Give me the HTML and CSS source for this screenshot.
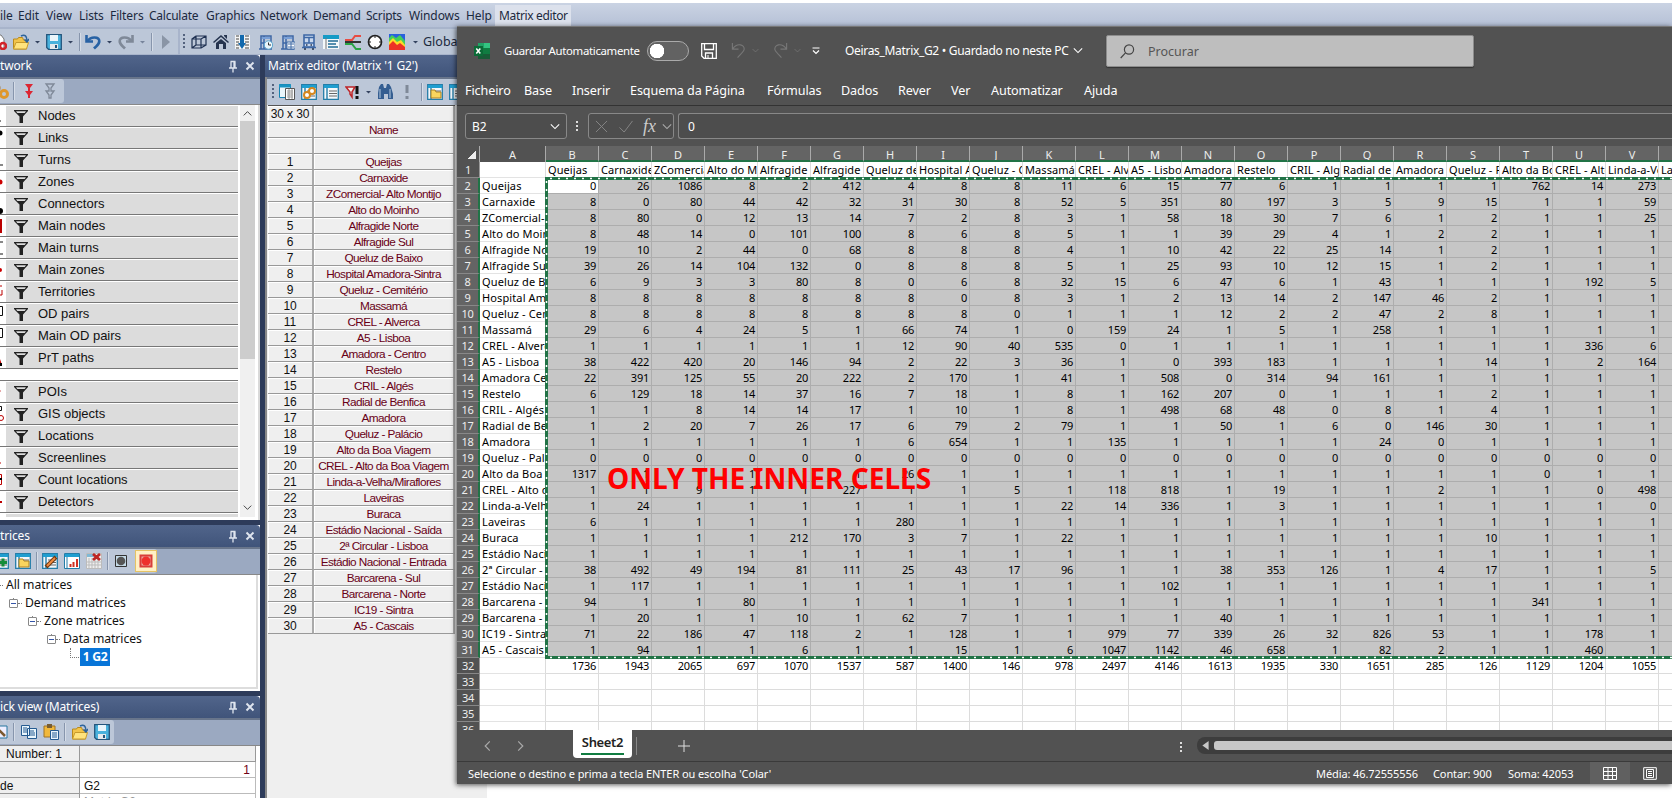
FILE: index.html
```html
<!DOCTYPE html>
<html lang="en">
<head>
<meta charset="utf-8">
<title>Matrix editor</title>
<link rel="stylesheet" href="styles.css">
</head>
<body>
<svg class="defs" aria-hidden="true">
  <symbol id="funnel" viewBox="0 0 14 13"><path d="M0 0h14v1L9 6.5V13H5.5V6.5L0 1z" fill="#222"/><path d="M2 1.2h10L10.700 3H3.300z" fill="#ddd"/></symbol>
  <symbol id="pin" viewBox="0 0 10 12"><path d="M2.500 1h5M3 1v6M6 1v6M7 1v6M1 7.500h8M5 8v4" stroke="#dfe5ef" stroke-width="1.300" fill="none"/></symbol>
  <symbol id="close" viewBox="0 0 10 10"><path d="M1.500 1.500l7 7M8.500 1.500l-7 7" stroke="#dfe5ef" stroke-width="1.900"/></symbol>
  <symbol id="arrow" viewBox="0 0 9 16"><path d="M2 7h5L4.500 9.500z" fill="#34435f"/></symbol>
  <symbol id="folder" viewBox="0 0 16 16"><path d="M.5 15V5h4l1-1.500h4L10.500 6h3v9z" fill="#f2c44a" stroke="#b98a1c"/><path d="M.5 15L3 8.500h12.500L13.500 15z" fill="#ffe37d" stroke="#c79a2c"/><path d="M8 2c4-2 6 0 6 5M11.500 5.500L14 8l2-3" fill="none" stroke="#2d639b" stroke-width="1.500"/></symbol>
  <symbol id="save" viewBox="0 0 16 16"><path d="M.7.7h14.600v14.600H2.500L.7 13.500z" fill="#49b1dc" stroke="#24557c" stroke-width="1.300"/><path d="M4 1h8v6H4z" fill="#eaf5fb"/><path d="M4 10h8v5H4z" fill="#e5e8ec"/><path d="M9 11h2v3H9z" fill="#24557c"/></symbol>
  <symbol id="undo" viewBox="0 0 16 16"><path d="M1.500 1v6.500H8" fill="none" stroke="currentColor" stroke-width="2.600"/><path d="M2.500 7C6 2 14 2.500 14.300 7c.2 3.500-3 5-5.300 7.500" fill="none" stroke="currentColor" stroke-width="2.600"/></symbol>
  <symbol id="sheet" viewBox="0 0 16 16"><path d="M.7.7h14.600v14.600H.7z" fill="#f4f8fb" stroke="#247da8" stroke-width="1.300"/><path d="M1 1h14v3H1z" fill="#1f9ed0"/><path d="M4 4v11" stroke="#247da8" stroke-width="1.400"/><path d="M6 7h8M6 9.500h8M6 12h8" stroke="#666"/></symbol>
  <symbol id="stop" viewBox="0 0 16 16"><path d="M4 15V2h10v13M4 9h10M7 2v13M2 15h13" fill="none" stroke="#3d67a5" stroke-width="1.500"/><path d="M5 3h8v2H5z" fill="#79a0d8"/></symbol>
  <symbol id="chev" viewBox="0 0 12 8"><path d="M1 1.500l5 5 5-5" fill="none" stroke="currentColor" stroke-width="1.300"/></symbol>
</svg>

<nav class="menubar"><span>ile</span><span>Edit</span><span>View</span><span>Lists</span><span>Filters</span><span>Calculate</span><span>Graphics</span><span>Network</span><span>Demand</span><span>Scripts</span><span>Windows</span><span>Help</span><span class="active">Matrix editor</span></nav>

<div class="toolbar">
  <div class="group main">
    <svg class="i doc" viewBox="0 0 16 16"><path d="M3 1h7l3 4v10H3z" fill="#fff" stroke="#777"/><circle cx="12" cy="12" r="3" fill="none" stroke="#d2232a" stroke-width="2.500"/></svg>
    <svg class="i"><use href="#folder"/></svg><svg class="a"><use href="#arrow"/></svg>
    <svg class="i"><use href="#save"/></svg><svg class="a"><use href="#arrow"/></svg><i class="sep"></i>
    <svg class="i blue"><use href="#undo"/></svg><svg class="a"><use href="#arrow"/></svg>
    <svg class="i gray flip"><use href="#undo"/></svg><svg class="a dim"><use href="#arrow"/></svg><i class="sep"></i>
    <svg class="i" viewBox="0 0 16 16"><path d="M5 1l8 7-8 7z" fill="#8a95a6"/></svg>
  </div>
  <div class="group extra">
    <i class="grip"></i>
    <svg class="i" viewBox="0 0 16 16"><path d="M1 5h9v9H1zM5 2h10v9H5zM1 5l4-3M10 5l5-3M1 14l4-3M10 14l5-3" fill="none" stroke="#1f3152" stroke-width="1.200"/></svg>
    <svg class="i" viewBox="0 0 16 16"><path d="M0 8l8-7 8 7-1 1-7-6-7 6zM11 1h3v4l-3-3zM3 9l5-4 5 4v6h-3v-5H6v5H3z" fill="#25344f"/></svg>
    <svg class="i" viewBox="0 0 16 16"><path d="M0 1h15v14H0z" fill="#f5f5f5"/><path d="M1 2h3M1 5h3M1 8h3M1 11h3M1 14h3M10 2h4M10 5h4M10 8h4M10 11h4M10 14h4" stroke="#444"/><path d="M5 1h4v8h2l-4 6-4-6h2z" fill="#1369ad"/></svg>
    <svg class="i" viewBox="0 0 16 16"><use href="#stop"/><circle cx="11.500" cy="11" r="4.200" fill="#e9f5fb" stroke="#58a5ce"/><path d="M11.500 8.500V11H14" stroke="#333" fill="none"/></svg>
    <svg class="i" viewBox="0 0 16 16"><use href="#stop"/><path d="M8 8h8v7H8z" fill="#fff" stroke="#426ca6"/><path d="M9 10h6M9 13h6M12 8v7" stroke="#426ca6"/></svg>
    <svg class="i" viewBox="0 0 16 16"><path d="M3 1h10v12H3z" fill="#c9d8ee" stroke="#3d67a5" stroke-width="1.600"/><path d="M3 3.500h10M3 9h10M8 3v6M1 13.500h14" stroke="#3d67a5" stroke-width="1.500"/><path d="M4 14v2M12 14v2M5 11h1.500M9.500 11H11" stroke="#25344f" stroke-width="1.500"/></svg>
    <svg class="i" viewBox="0 0 16 16"><path d="M0 1h16v14H0z" fill="#f4f8fa"/><path d="M0 1h16v4H0z" fill="#169bc6"/><path d="M5 7h10M5 10h8M5 13h10" stroke="#216b97" stroke-width="1.500"/><path d="M3 4v11" stroke="#777"/></svg>
    <svg class="i" viewBox="0 0 16 16"><path d="M0 6h7l3-4h6" fill="none" stroke="#e84c43" stroke-width="2"/><path d="M0 8h16" stroke="#333" stroke-width="2"/><path d="M0 10h7l4 5h5" fill="none" stroke="#2aa344" stroke-width="2"/></svg>
    <svg class="i" viewBox="0 0 16 16"><circle cx="8" cy="8" r="6.500" fill="#fff" stroke="#222" stroke-width="1.700"/><path d="M8 1v3M8 12v3M1 8h3M12 8h3" stroke="#222"/></svg>
    <svg class="i" viewBox="0 0 16 16"><path d="M0 0h16v16H0z" fill="#2a61dd"/><path d="M0 4l3-3 4 3 4-3 5 6v9H0z" fill="#43cf59"/><path d="M0 8l4-4 4 4 4-2 4 5v5H0z" fill="#ffd928"/><path d="M0 11l4-4 4 4 3-2 5 4v3H0z" fill="#ed3126"/></svg>
    <svg class="a"><use href="#arrow"/></svg><span class="global">Global</span>
  </div>
</div>

<main class="workspace">
  <aside class="left">
    <section class="panel network">
      <header class="title"><span>twork</span><svg class="pin"><use href="#pin"/></svg><svg class="close"><use href="#close"/></svg></header>
      <div class="tools"><div class="toolgroup net-tools">
        <svg class="i" viewBox="0 0 16 16"><circle cx="4" cy="5" r="3.500" fill="#a67431"/><circle cx="11" cy="11" r="3.500" fill="none" stroke="#df972c" stroke-width="3"/></svg><i class="sep"></i>
        <svg class="i red" viewBox="0 0 16 16"><path d="M4 1h8L9 5v3h3l-3 4v3H7v-3L4 8h3V5z" fill="currentColor"/></svg>
        <svg class="i gray" viewBox="0 0 16 16"><path d="M4 1h8L9 5v3h3l-3 4v3H7v-3L4 8h3V5z" fill="none" stroke="currentColor" stroke-width="1.300"/></svg>
      </div></div>
      <div class="listwrap"><div id="objects"></div><div class="scroll"><svg class="up"><use href="#chev"/></svg><i></i><svg><use href="#chev"/></svg></div></div>
    </section>
    <section class="panel matrices">
      <header class="title"><span>trices</span><svg class="pin"><use href="#pin"/></svg><svg class="close"><use href="#close"/></svg></header>
      <div class="tools"><div class="toolgroup mat-tools">
        <svg class="i" viewBox="0 0 16 16"><use href="#sheet"/><path d="M6 9.500h8M10 5.500v8" stroke="#168d3a" stroke-width="3"/></svg>
        <svg class="i" viewBox="0 0 16 16"><use href="#sheet"/><path d="M4 14V6h4l1 2h5v6z" fill="#f9d55e" stroke="#a88126"/></svg><i class="sep"></i>
        <svg class="i" viewBox="0 0 16 16"><use href="#sheet"/><path d="M4 14L14 4" stroke="#6d3b14" stroke-width="4"/><path d="M5 13l8-8" stroke="#f28a3e" stroke-width="2"/></svg>
        <svg class="i" viewBox="0 0 16 16"><path d="M.5.500h15v15H.5z" fill="#fff" stroke="#247da8"/><path d="M1 1h14v3H1z" fill="#1f9ed0"/><path d="M3 4v11" stroke="#247da8"/><path d="M6.500 14v-3M9.500 14V9M13 14V6" stroke="#d13225" stroke-width="2"/></svg>
        <svg class="i" viewBox="0 0 16 16"><path d="M.5.500h15v15H.5z" fill="#eee" stroke="#bbb"/><path d="M1 1h7v3H1z" fill="#7fb9d6"/><path d="M3 5v10M6 5v10M9 5v10M12 5v10M1 9h14M1 12h14" stroke="#bbb"/><path d="M7 1l7 6M14 1L7 7" stroke="#bd2725" stroke-width="2.800"/></svg><i class="sep"></i>
        <svg class="i" viewBox="0 0 16 16"><path d="M2.500 2.500h11v11h-11z" fill="#c4d9e5" stroke="#333"/><circle cx="8" cy="8" r="4.300" fill="#555"/></svg>
        <svg class="i rec" viewBox="0 0 16 16"><path d="M2.500 2.500h11v11h-11z" fill="#edaaa2" stroke="#d83e3a" stroke-width="2"/><circle cx="8" cy="8" r="4.500" fill="#ee302b"/></svg>
      </div></div>
      <div class="tree">
        <div class="node n0"><i class="dots"></i>All matrices</div>
        <div class="node n1"><b></b><i class="dots"></i>Demand matrices</div>
        <div class="node n2"><b></b><i class="dots"></i>Zone matrices</div>
        <div class="node n3"><b></b><i class="dots"></i>Data matrices</div>
        <div class="node n4"><i class="elbow"></i><strong>1 G2</strong></div>
      </div>
    </section>
    <section class="panel quick">
      <header class="title"><span>ick view (Matrices)</span><svg class="pin"><use href="#pin"/></svg><svg class="close"><use href="#close"/></svg></header>
      <div class="tools"><div class="toolgroup quick-tools">
        <svg class="i" viewBox="0 0 16 16"><path d="M0 2h15v12H0z" fill="#eef" stroke="#2676a0"/><path d="M5 4l8 8" stroke="#7a5930" stroke-width="2.500"/></svg><i class="sep"></i>
        <svg class="i" viewBox="0 0 16 16"><path d="M.5 1.500h8v10h-8zM6.500 4.500h9v10h-9z" fill="#eaf6fd" stroke="#255b91"/><path d="M2 4h4M2 6h4M2 8h4M8 7h5M8 9h6M8 11h6" stroke="#255b91"/></svg>
        <svg class="i" viewBox="0 0 16 16"><path d="M1 2h11v11H1z" fill="#f1b83b" stroke="#9f7226"/><path d="M4 0h5v4H4z" fill="#785d32"/><path d="M7.500 6.500h8v9h-8z" fill="#eaf6fd" stroke="#255b91"/><path d="M9 9h5M9 11h5M9 13h5" stroke="#255b91"/></svg><i class="sep"></i>
        <svg class="i"><use href="#folder"/></svg><svg class="i"><use href="#save"/></svg>
      </div></div>
      <div class="props"><span class="gray-cell number">Number: 1</span><span class="gray-cell"></span><span class="gray-cell"></span><span class="value">1</span><span class="gray-cell">de</span><span>G2</span><span class="gray-cell cut"></span><span class="cut">Matrix G2</span></div>
    </section>
  </aside>

  <section class="editor">
    <header class="title"><span>Matrix editor (Matrix '1 G2')</span></header>
    <div class="toolgroup edit-tools"><i class="grip"></i>
      <svg class="i" viewBox="0 0 16 16"><path d="M.5.500h11v13H.5z" fill="#eaf6fb" stroke="#1683b1"/><path d="M0 2h12" stroke="#1994c3" stroke-width="3"/><path d="M6.500 4.500h9v11h-9z" fill="#fff" stroke="#555"/><path d="M8 7h6M8 9h6M8 11h6M8 13h6M10 5v10M13 5v10" stroke="#999"/></svg>
      <svg class="i" viewBox="0 0 16 16"><use href="#sheet"/><circle cx="6" cy="11" r="3" fill="#fff" stroke="#d48720" stroke-width="2"/><circle cx="11" cy="7" r="3" fill="#fff" stroke="#d48720" stroke-width="2"/></svg>
      <svg class="i"><use href="#sheet"/></svg>
      <svg class="i" viewBox="0 0 16 16"><path d="M1 3h9L7 8v5L5 10V8z" fill="#eee" stroke="#bd2529" stroke-width="1.500"/><path d="M12 2v8M12 12v3" stroke="#111" stroke-width="3"/></svg>
      <svg class="a"><use href="#arrow"/></svg>
      <svg class="i" viewBox="0 0 16 16"><path d="M2 3l2-3h2l1 4h2l1-4h2l2 3 2 7v5h-5v-5H7v5H1v-6z" fill="#355e91"/><path d="M3 5v9M13 5v9" stroke="#b8cbe0"/></svg>
      <svg class="i gray" viewBox="0 0 16 16"><path d="M8 1v8M8 12v3" stroke="currentColor" stroke-width="3"/></svg><i class="sep"></i>
      <svg class="i" viewBox="0 0 16 16"><use href="#sheet"/><path d="M4 14V6h4l1 2h5v6z" fill="#f9d55e" stroke="#a88126"/></svg>
      <svg class="i"><use href="#sheet"/></svg>
    </div>
    <div id="zones"></div>
  </section>
</main>
<div class="backdrop"></div>

<section class="excel">
  <header class="xl-title">
    <svg class="logo" viewBox="0 0 16 16"><path d="M4 0h12v16H4z" fill="#107c41"/><path d="M4 0h6v5H4z" fill="#21a366"/><path d="M10 0h6v5h-6z" fill="#33c481"/><path d="M4 11h12v5H4z" fill="#185c37"/><path d="M0 3h9v10H0z" fill="#0b6b37"/><path d="M2.300 5.500l4 5M6.300 5.500l-4 5" stroke="#fff" stroke-width="1.500"/></svg>
    <span class="autosave">Guardar Automaticamente</span><i class="toggle"></i>
    <svg class="xl-save" viewBox="0 0 16 16"><path d="M.7.7h14.600v14.600H3L.7 13zM3.500 1v5.500h9V1M4.500 15v-5h7v5" fill="none" stroke="#fff" stroke-width="1.300"/><path d="M7 12v3" stroke="#fff"/></svg>
    <svg class="xl-undo" viewBox="0 0 16 16"><path d="M1.500 0v6.500H8M2 6C7-1 15 2 14 7c-.5 2-3 4-7 8.500" fill="none" stroke="#777" stroke-width="1.200"/></svg><svg class="tiny"><use href="#chev"/></svg>
    <svg class="xl-undo flip" viewBox="0 0 16 16"><path d="M1.500 0v6.500H8M2 6C7-1 15 2 14 7c-.5 2-3 4-7 8.500" fill="none" stroke="#777" stroke-width="1.200"/></svg><svg class="tiny"><use href="#chev"/></svg>
    <svg class="more" viewBox="0 0 8 8"><path d="M.5 1h7" stroke="#fff"/><path d="M1 3.500l3 3 3-3" stroke="#fff" fill="none" stroke-width="1.200"/></svg>
    <span class="filename">Oeiras_Matrix_G2 • Guardado no neste PC</span><svg class="filechev"><use href="#chev"/></svg>
    <div class="search"><svg viewBox="0 0 15 15"><circle cx="9" cy="5.500" r="4.600" fill="none" stroke="#444" stroke-width="1.200"/><path d="M5.500 8.800L.7 14" stroke="#444" stroke-width="1.200"/></svg><span>Procurar</span></div>
  </header>
  <nav class="ribbon"><span>Ficheiro</span><span>Base</span><span>Inserir</span><span>Esquema da Página</span><span>Fórmulas</span><span>Dados</span><span>Rever</span><span>Ver</span><span>Automatizar</span><span>Ajuda</span></nav>
  <div class="formula"><div class="namebox"><span>B2</span><svg><use href="#chev"/></svg></div><i class="vdots"></i><div class="fx"><svg viewBox="0 0 14 14"><path d="M1 1l12 12M13 1L1 13" stroke="#888"/></svg><svg class="check" viewBox="0 0 16 14"><path d="M1 8l5 5L15 1" fill="none" stroke="#888"/></svg><em>fx</em><svg class="fxchev"><use href="#chev"/></svg></div><div class="entry">0</div></div>
  <div class="sheet"><div id="grid"></div><svg class="marquee" viewBox="0 0 1127 482"><path d="M1127 1.500H1.500v479H1127" fill="none" stroke="#217346" stroke-width="3"/><path d="M1127 1.500H1.500v479H1127" fill="none" stroke="#fff" stroke-width="1.500" stroke-dasharray="2 6"/></svg><strong class="note">ONLY THE INNER CELLS</strong></div>
  <div class="tabs"><svg class="prev"><use href="#chev"/></svg><svg class="next"><use href="#chev"/></svg><div class="tab"><span>Sheet2</span></div><i class="tabsep"></i><svg class="plus" viewBox="0 0 12 12"><path d="M6 0v12M0 6h12" stroke="#ddd"/></svg><i class="vdots"></i><div class="hscroll"><svg viewBox="0 0 7 10"><path d="M7 0v10L0 5z" fill="#c6c6c6"/></svg><i></i></div></div>
  <footer class="status"><span class="msg">Selecione o destino e prima a tecla ENTER ou escolha 'Colar'</span><span class="avg">Média: 46.72555556</span><span class="count">Contar: 900</span><span class="sum">Soma: 42053</span><div class="view"><svg viewBox="0 0 14 13"><path d="M.5.500h13v12H.5zM5 .5v12M9.500.500v12M.5 4.500h13M.5 8.500h13" fill="none" stroke="#fff"/></svg></div><svg class="page" viewBox="0 0 14 13"><path d="M.7.700h12.600v11.600H.7zM3.500 2.500h7v8h-7zM5 4.500h4M5 6.500h4M5 8.500h4" fill="none" stroke="#fff"/></svg></footer>
</section>
<script src="script.js"></script>
</body>
</html>
```

FILE: styles.css
```css
* { box-sizing: border-box; }
body { margin: 0; width: 1672px; height: 798px; overflow: hidden; position: relative; background: #fff; font: 12px "Noto Sans", "Open Sans", sans-serif; color: #111; }
svg { display: block; flex: none; }
.defs { position: absolute; width: 0; height: 0; }
.i { width: 16px; height: 16px; }
.a { width: 9px; height: 16px; }
.flip { transform: scaleX(-1); }
.dim { opacity: .5; }
.blue { color: #2862a4; }
.gray { color: #7f8998; }
.red { color: #dc2633; }
.sep { width: 2px; height: 18px; border-left: 1px solid #8795ac; border-right: 1px solid #d5dce7; flex: none; }
.grip { width: 2px; height: 16px; flex: none; background: repeating-linear-gradient(#53627d 0 2px, transparent 2px 4px); }

.menubar { margin-top: 3px; height: 24px; display: flex; background: linear-gradient(#cad3e3, #b5c0d6); line-height: 25px; color: #1b293e; letter-spacing: -.1px; white-space: nowrap; }
.menubar span { flex: none; width: 53px; }
.menubar span:nth-child(1) { width: 18px; }
.menubar span:nth-child(2) { width: 28px; }
.menubar span:nth-child(3) { width: 33px; }
.menubar span:nth-child(4) { width: 31px; }
.menubar span:nth-child(5) { width: 39px; }
.menubar span:nth-child(6) { width: 57px; letter-spacing: -.25px; }
.menubar span:nth-child(7) { width: 54px; }
.menubar span:nth-child(10) { width: 43px; letter-spacing: -.3px; }
.menubar span:nth-child(11) { width: 57px; }
.menubar span:nth-child(12) { width: 29px; }
.menubar .active { margin-top: 2px; height: 21px; line-height: 21px; width: 76px; padding-left: 4px; background: #dce1ec; letter-spacing: -.35px; }

.toolbar { height: 28px; display: flex; gap: 2px; background: #a8b4cb; padding-top: 2px; }
.group { display: flex; align-items: center; background: #bcc7d8; height: 25px; }
.main { width: 178px; gap: 4px; }
.doc { margin: 0 2px 0 -9px; }
.extra { flex: 1; gap: 6px; padding-left: 3px; }
.extra .a { margin: 0 -3px 0 0; }
.global { font-size: 12.5px; color: #1b293e; }
.workspace { display: flex; height: 743px; background: #2d3b5a; }
.left { width: 260px; display: flex; flex-direction: column; gap: 5px; overflow: hidden; }
.panel { width: 260px; background: #fff; flex: none; }
.title { height: 22px; display: flex; align-items: center; background: linear-gradient(#51658b, #40547a); color: #fff; padding-right: 5px; border-radius: 0 4px 0 0; line-height: 22px; white-space: nowrap; }
.title span { flex: 1; letter-spacing: -.15px; }
.pin { width: 10px; height: 13px; margin-right: 7px; }
.close { width: 10px; height: 10px; }
.tools { height: 28px; background: #9ba9c1; border-top: 2px solid #68758b; border-bottom: 1px solid #888; }
.toolgroup { display: flex; align-items: center; height: 24px; background: #bcc7d8; gap: 6px; border-radius: 0 3px 3px 0; }
.net-tools { width: 64px; padding-left: 0; gap: 5px; }
.net-tools .i:first-child { margin-left: -7px; }
.net-tools .sep { margin: 0 1px 0 -1px; }
.network { height: 465px; }
.listwrap { display: flex; height: 415px; padding-top: 0; border-right: 2px solid #d9d9d9; }
#objects { width: 240px; height: 412px; overflow: hidden; }
.object { height: 22px; display: grid; grid-template-columns: 6px 32px 200px; border-bottom: 1px solid #777; width: 238px; font: 13px/19px "Liberation Sans", Arial, sans-serif; }
.object svg { width: 14px; height: 13px; }
.object .filter, .object .label { background: #dcdcdc; margin-top: 1px; height: 20px; }
.object .filter { padding: 4px 0 0 8px; }
.object .mark { width: 6px; height: 21px; overflow: visible; }
.spacer { height: 12px; width: 238px; border-bottom: 1px solid #777; }
.scroll { width: 15px; height: 412px; background: #f0f0f0; color: #444; display: flex; flex-direction: column; align-items: center; justify-content: space-between; padding: 5px 0; }
.scroll svg { width: 9px; height: 7px; stroke-width: 2px; margin-bottom: 1px; }
.scroll .up { transform: scaleY(-1); margin: 0 0 4px; }
.scroll i { width: 15px; height: 238px; background: #cdcdcd; margin-bottom: auto; }
.matrices { height: 166px; }
.mat-tools { width: 157px; gap: 5px; }
.mat-tools .i:first-child { margin-left: -7px; }
.mat-tools .sep { margin: 0 -1px 0 0; }
.mat-tools .i + .i { margin-left: 1px; }
.mat-tools .rec { width: 22px; height: 22px; padding: 2px; background: #fff0c5; border: 1px solid #e5c365; }
.tree { height: 114px; border-right: 2px solid #ddd; margin-right: 2px; border-bottom: 2px solid #ddd; }
.node { height: 18px; display: flex; align-items: center; white-space: nowrap; line-height: 18px; }
.tree { padding-top: 1px; font-size: 12.2px; letter-spacing: -.05px; }
.n1 { padding-left: 9px; } .n2 { padding-left: 28px; } .n3 { padding-left: 47px; } .n4 { padding-left: 70px; }
.dots { width: 3px; border-top: 1px dotted #777; margin: 0 3px 0 0; }
.n1 .dots, .n2 .dots, .n3 .dots { width: 4px; }
.node b { width: 9px; height: 9px; border: 1px solid #888; border-radius: 1px; background: linear-gradient(#3555a8, #3555a8) center/5px 1px no-repeat; box-shadow: 0 -5px 0 -4px #888; }
.elbow { width: 9px; height: 10px; border-left: 1px dotted #777; border-bottom: 1px dotted #777; margin-top: -8px; }
.n4 strong { background: #0875d8; color: #fff; width: 30px; text-align: center; margin-left: 1px; letter-spacing: -.3px; }
.quick { height: 104px; }
.quick-tools { width: 114px; gap: 5px; }
.quick-tools .i:first-child { margin-left: -8px; }
.quick-tools .sep { margin: 0 1px 0 0; }
.quick-tools .i + .i { margin-left: 1px; }
.props { display: grid; grid-template-columns: 80px 176px; grid-auto-rows: 16px; width: 256px; height: 55px; overflow: hidden; font: 12px/16px "Liberation Sans", Arial, sans-serif; }
.props span { border-right: 1px solid #bbb; border-bottom: 1px solid #bbb; padding-left: 4px; overflow: hidden; }
.props .gray-cell { background: #efefef; border-color: #999; padding-left: 0; }
.props .number { padding-left: 6px; }
.props .value { text-align: right; padding-right: 5px; color: #700016; }
.props .cut { color: #999; }
.editor { margin-left: 5px; width: 222px; height: 743px; background: #efefef; border-left: 2px solid #888; }
.editor .title { padding-left: 3px; margin-left: -2px; border-radius: 0; }
.edit-tools { height: 28px; border-top: 2px solid #68758b; padding-left: 5px; border-radius: 0; }
.edit-tools .grip { margin-right: -1px; }
.edit-tools .a { margin: 0 -2px 0 -3px; }
.edit-tools .sep { margin-right: -2px; }
#zones { margin-left: 1px; width: 187px; border-top: 1px solid #555; font: 12px/16px "Liberation Sans", Arial, sans-serif; letter-spacing: -.1px; }
.zone { display: grid; grid-template-columns: 46px 141px; height: 16px; text-align: center; }
.zone span { border-right: 2px solid #aaa; border-bottom: 1px solid #999; box-shadow: inset 1px 1px #fff; white-space: nowrap; overflow: hidden; }
.zone span:last-child { color: #680016; font-size: 11.8px; letter-spacing: -.57px; }
.backdrop { position: absolute; left: 487px; top: 784px; right: 0; height: 14px; background: #fff; }

.excel { position: absolute; left: 457px; top: 26px; width: 1215px; height: 758px; background: #525252; border-top: 1px solid #777; box-shadow: -1px 1px 5px rgba(0,0,0,.65); color: #fff; overflow: visible; }
.xl-title { height: 47px; display: flex; align-items: center; padding-left: 17px; white-space: nowrap; }
.logo { width: 16px; height: 16px; }
.autosave { width: 142px; margin-left: 14px; font-size: 11.4px; letter-spacing: -.33px; }
.toggle { width: 42px; height: 20px; border: 1px solid #aaa; border-radius: 10px; background: radial-gradient(circle at 9px 9px, #fff 0 7px, #626262 7.500px); margin-left: 1px; }
.xl-save { width: 16px; height: 16px; margin-left: 12px; }
.xl-undo { width: 15px; height: 17px; margin-left: 14px; }
.tiny { width: 7px; height: 5px; color: #777; margin-left: 6px; }
.more { width: 8px; height: 8px; margin-left: 11px; }
.filename { width: 228px; margin-left: 25px; font-size: 12px; letter-spacing: -.32px; }
.filechev { width: 10px; height: 7px; margin-left: 0; }
.search { display: flex; align-items: center; margin-left: 23px; margin-top: 1px; width: 368px; height: 32px; border-radius: 2px; background: #bebebe; border: 1px solid #8d8d8d; color: #555; padding-left: 13px; font-size: 12.5px; box-shadow: 0 1px 1px #333; }
.search svg { width: 15px; height: 15px; margin-right: 13px; }
.ribbon { display: flex; height: 32px; padding-left: 8px; line-height: 34px; font-size: 12.6px; white-space: nowrap; border-bottom: 1px solid #333; letter-spacing: -.1px; }
.ribbon span { flex: none; }
.ribbon span:nth-child(1) { width: 59px; } .ribbon span:nth-child(2) { width: 48px; } .ribbon span:nth-child(3) { width: 58px; } .ribbon span:nth-child(4) { width: 137px; } .ribbon span:nth-child(5) { width: 74px; } .ribbon span:nth-child(6) { width: 57px; } .ribbon span:nth-child(7) { width: 53px; } .ribbon span:nth-child(8) { width: 40px; } .ribbon span:nth-child(9) { width: 93px; }
.formula { display: flex; height: 40px; padding: 7px 0 7px 8px; align-items: stretch; font-size: 12px; }
.namebox, .fx, .entry { border: 1px solid #888; border-radius: 3px; height: 26px; background: #4d4d4d; display: flex; align-items: center; }
.namebox { width: 102px; padding: 0 6px; justify-content: space-between; }
.namebox svg { width: 10px; height: 7px; }
.vdots { width: 2px; height: 10px; background: repeating-linear-gradient(#ddd 0 2px, transparent 2px 4px); flex: none; }
.formula .vdots { margin: 8px 10px 0 9px; }
.fx { width: 86px; padding-left: 6px; }
.fx svg { width: 13px; height: 13px; }
.fx .check { width: 16px; margin-left: 10px; }
.fx em { font: italic 18px/20px "Liberation Serif", serif; color: #ccc; margin-left: 9px; width: 19px; }
.fx .fxchev { width: 10px; height: 7px; color: #aaa; }
.entry { flex: 1; margin-left: 4px; border-right: 0; border-radius: 3px 0 0 3px; padding-left: 9px; }
.sheet { height: 584px; position: relative; overflow: hidden; background: #fff; }
#grid { font-size: 11px; line-height: 15px; color: #000; }
.row { display: grid; grid-template-columns: 23px 66px repeat(22, 53px); height: 16px; width: 1255px; }
.row span { border-right: 1px solid #dcdcdc; border-bottom: 1px solid #dcdcdc; overflow: hidden; white-space: nowrap; text-align: right; padding-right: 2px; letter-spacing: -.25px; }
.row span:nth-child(2) { text-align: left; padding-left: 2px; letter-spacing: .12px; border-bottom-color: #e3e3e3; }
.row .rh { background: #525252; color: #eee; text-align: center; padding: 0; border-right: 1px solid #999; border-bottom-color: #888; }
.row.sel .rh { background: #646464; border-right: 2px solid #217346; }
.row.sel span:nth-child(n+3) { background: #c6c6c6; border-color: #adadad; }
.row.sel.first span:nth-child(3) { background: #fff; }
.row.names span:not(.rh) { text-align: left; padding: 0 0 0 2px; letter-spacing: .08px; }
.row.head span { background: #646464; color: #eee; text-align: center; border-right-color: #aaa; border-bottom: 0; padding: 1px 0 0; letter-spacing: 0; height: 16px; }
.row.head span:nth-child(-n+2) { background: #525252; }
.row.head span:nth-child(n+3) { border-bottom: 2px solid #217346; }
.row.head span:first-child { background: linear-gradient(135deg, transparent 50%, #eee 50%) 11px 5px/8px 8px no-repeat #525252; }
.marquee { position: absolute; left: 88px; top: 31px; width: 1127px; height: 482px; }
.note { position: absolute; left: 150px; top: 313px; font-size: 28.1px; line-height: 38px; color: #f00; white-space: nowrap; }
.tabs { height: 32px; display: flex; align-items: center; border-bottom: 1px solid #3a3a3a; color: #aaa; padding-left: 25px; }
.prev, .next { width: 11px; height: 8px; transform: rotate(90deg); }
.next { transform: rotate(-90deg); margin-left: 22px; }
.tab { width: 59px; height: 28px; background: #fff; color: #222; align-self: flex-start; border-radius: 0 0 4px 4px; font-weight: 600; margin-left: 47px; text-align: center; font-size: 13px; line-height: 25px; letter-spacing: -.35px; }
.tab span { display: block; width: 43px; margin: 0 auto; height: 25px; border-bottom: 2px solid #107c41; }
.tabsep { width: 1px; height: 18px; background: #888; margin-left: 4px; }
.plus { width: 12px; height: 12px; margin-left: 41px; }
.tabs .vdots { margin: 2px 0 0 490px; }
.hscroll { flex: 1; height: 17px; border-radius: 8px 0 0 8px; margin-left: 15px; background: #3d3d3d; display: flex; align-items: center; padding-left: 5px; }
.hscroll svg { width: 7px; height: 9px; }
.hscroll i { flex: 1; height: 9px; margin-left: 5px; background: #c6c6c6; border-radius: 3px 0 0 3px; }
.status { height: 22px; display: flex; align-items: center; padding-left: 11px; font-size: 11px; letter-spacing: -.1px; white-space: nowrap; }
.msg { width: 848px; } .avg { width: 117px; } .count { width: 75px; } .sum { width: 82px; }
.view { width: 40px; height: 22px; background: #606060; display: flex; align-items: center; justify-content: center; }
.view svg, .page { width: 14px; height: 13px; }
.page { margin-left: 13px; }
```

FILE: script.js
```js
const objects = ["Nodes", "Links", "Turns", "Zones", "Connectors", "Main nodes", "Main turns", "Main zones", "Territories", "OD pairs", "Main OD pairs", "PrT paths", "", "POIs", "GIS objects", "Locations", "Screenlines", "Count locations", "Detectors", " "];
const marks = {
  Nodes: '<path d="M0 16h1" stroke="#111"/>',
  Links: '<circle cx="0" cy="6" r="2.500"/>',
  Turns: '<path d="M0 16h3" stroke="#111"/>',
  Zones: '<circle cx="0" cy="11" r="2.500" fill="#c00"/>',
  Connectors: '<circle cx="0" cy="18" r="3"/>',
  "Main nodes": '<path d="M0 4h2v14H0z" fill="#b00"/>',
  "Main turns": '<path d="M0 5h3M0 17h3" stroke="#111"/>',
  "Main zones": '<circle cx="0" cy="11" r="2" fill="#c00"/>',
  Territories: '<path d="M0 5h2M0 14h2V9" stroke="#b00" fill="none"/>',
  "OD pairs": '<path d="M0 3.500h2.500v9H0" stroke="#111" fill="none"/>',
  "Main OD pairs": '<path d="M0 3.500h2.500v9H0" stroke="#111" fill="none"/>',
  "PrT paths": '<path d="M0 12l2 6H0z" fill="#c00"/><path d="M0 16h2v3H0z"/>',
  POIs: '<path d="M0 10h1" stroke="#c55"/>',
  "GIS objects": '<path d="M0 3.500h1.500v4H0" stroke="#111" fill="none"/><circle cx="1" cy="15" r="2.500" stroke="#b00" fill="none"/>',
  Screenlines: '<path d="M0 16h1" stroke="#b00"/>',
  "Count locations": '<path d="M0 5.500h1.500v10H0" stroke="#b00" fill="none"/><path d="M0 10h2" stroke="#000" stroke-width="2"/>',
  Detectors: '<path d="M0 11h2" stroke="#b00" stroke-width="2"/>'
};
document.getElementById("objects").innerHTML = objects.map(name => name === ""
  ? '<div class="spacer"></div>'
  : `<div class="object"><svg class="mark" viewBox="0 0 6 21">${marks[name] || ""}</svg><span class="filter">${name === " " ? "" : '<svg><use href="#funnel"/></svg>'}</span><span class="label">${name}</span></div>`).join("");

const zones = ["Queijas", "Carnaxide", "ZComercial- Alto Montijo", "Alto do Moinho", "Alfragide Norte", "Alfragide Sul", "Queluz de Baixo", "Hospital Amadora-Sintra", "Queluz - Cemitério", "Massamá", "CREL - Alverca", "A5 - Lisboa", "Amadora - Centro", "Restelo", "CRIL - Algés", "Radial de Benfica", "Amadora", "Queluz - Palácio", "Alto da Boa Viagem", "CREL - Alto da Boa Viagem", "Linda-a-Velha/Miraflores", "Laveiras", "Buraca", "Estádio Nacional - Saída", "2ª Circular - Lisboa", "Estádio Nacional - Entrada", "Barcarena - Sul", "Barcarena - Norte", "IC19 - Sintra", "A5 - Cascais"];
document.getElementById("zones").innerHTML = [["30 x 30", ""], ["", "Name"], ["", ""], ...zones.map((z, i) => [i + 1, z])]
  .map(([n, z]) => `<div class="zone"><span>${n}</span><span>${z}</span></div>`).join("");

const labels = ["Queijas", "Carnaxide", "ZComercial- Alto", "Alto do Moinho", "Alfragide Norte", "Alfragide Sul", "Queluz de Baixo", "Hospital Amadora", "Queluz - Cemitério", "Massamá", "CREL - Alverca", "A5 - Lisboa", "Amadora Centro", "Restelo", "CRIL - Algés", "Radial de Benfica", "Amadora", "Queluz - Palácio", "Alto da Boa Viagem", "CREL - Alto da Boa", "Linda-a-Velha", "Laveiras", "Buraca", "Estádio Nacional", "2ª Circular - Lisboa", "Estádio Nacional", "Barcarena - Sul", "Barcarena - Norte", "IC19 - Sintra", "A5 - Cascais"];
const ones = n => Array(n).fill(1).join(" ");
const data = [
  "0 26 1086 8 2 412 4 8 8 11 6 15 77 6 1 1 1 1 762 14 273",
  "8 0 80 44 42 32 31 30 8 52 5 351 80 197 3 5 9 15 1 1 59",
  "8 80 0 12 13 14 7 2 8 3 1 58 18 30 7 6 1 2 1 1 25",
  "8 48 14 0 101 100 8 6 8 5 1 1 39 29 4 1 2 2 1 1 1",
  "19 10 2 44 0 68 8 8 8 4 1 10 42 22 25 14 1 2 1 1 1",
  "39 26 14 104 132 0 8 8 8 5 1 25 93 10 12 15 1 2 1 1 1",
  "6 9 3 3 80 8 0 6 8 32 15 6 47 6 1 43 1 1 1 192 5",
  "8 8 8 8 8 8 8 0 8 3 1 2 13 14 2 147 46 2 1 1 1",
  "8 8 8 8 8 8 8 8 0 1 1 1 12 2 2 47 2 8 1 1 1",
  "29 6 4 24 5 1 66 74 1 0 159 24 1 5 1 258 1 1 1 1 1",
  "1 1 1 1 1 1 12 90 40 535 0 1 1 1 1 1 1 1 1 336 6",
  "38 422 420 20 146 94 2 22 3 36 1 0 393 183 1 1 1 14 1 2 164",
  "22 391 125 55 20 222 2 170 1 41 1 508 0 314 94 161 1 1 1 1 1",
  "6 129 18 14 37 16 7 18 1 8 1 162 207 0 1 1 1 2 1 1 1",
  "1 1 8 14 14 17 1 10 1 8 1 498 68 48 0 8 1 4 1 1 1",
  "1 2 20 7 26 17 6 79 2 79 1 1 50 1 6 0 146 30 1 1 1",
  "1 1 1 1 1 1 6 654 1 1 135 1 1 1 1 24 0 1 1 1 1",
  Array(21).fill(0).join(" "),
  "1317 1 1 1 1 1 26 1 1 1 1 1 1 1 1 1 1 1 0 1 1",
  "1 1 9 1 1 227 1 1 5 1 118 818 1 19 1 1 2 1 1 0 498",
  "1 24 1 1 1 1 1 1 1 22 14 336 1 3 1 1 1 1 1 1 0",
  "6 1 1 1 1 1 280 " + ones(14),
  "1 1 1 1 212 170 3 7 1 22 1 1 1 1 1 1 1 10 1 1 1",
  ones(21),
  "38 492 49 194 81 111 25 43 17 96 1 1 38 353 126 1 4 17 1 1 5",
  "1 117 1 1 1 1 1 1 1 1 1 102 " + ones(9),
  "94 1 1 80 " + ones(14) + " 341 1 1",
  "1 20 1 1 10 1 62 7 1 1 1 1 40 " + ones(8),
  "71 22 186 47 118 2 1 128 1 1 979 77 339 26 32 826 53 1 1 178 1",
  "1 94 1 1 6 1 1 15 1 6 1047 1142 46 658 1 82 2 1 1 460 1",
  "1736 1943 2065 697 1070 1537 587 1400 146 978 2497 4146 1613 1935 330 1651 285 126 1129 1204 1055"
];
const row = (cls, cells) => `<div class="row ${cls}">` + cells.map((c, i) => `<span${i === 0 ? ' class="rh"' : ""}>${c}</span>`).join("") + "</div>";
let html = row("head", ["", ..."ABCDEFGHIJKLMNOPQRSTUV".split(""), ""]);
html += row("names", [1, "", ...labels.slice(0, 22)]);
data.forEach((line, i) => {
  html += row((i < 30 ? "sel" : "") + (i === 0 ? " first" : ""), [i + 2, labels[i] || "", ...line.split(" "), ""]);
});
for (let r = 33; r <= 36; r++) html += row("", [r, ...Array(23).fill("")]);
document.getElementById("grid").innerHTML = html;
```
